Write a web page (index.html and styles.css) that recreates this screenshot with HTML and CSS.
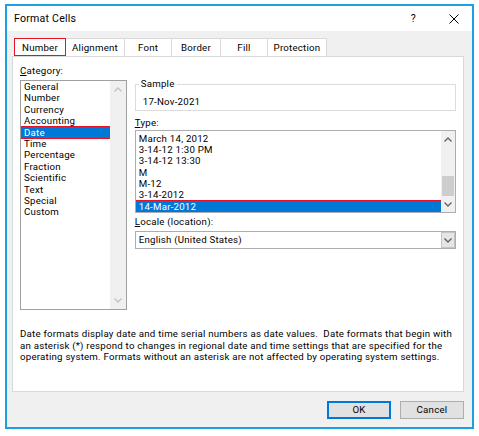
FILE: index.html
```html
<!DOCTYPE html>
<html>
<head>
<meta charset="utf-8">
<title>Format Cells</title>
<link rel="stylesheet" href="styles.css">
</head>
<body>
<div class="window">
  <div class="titlebar">
    <span class="title">Format Cells</span>
    <span class="help">?</span>
    <svg class="close" width="10" height="10" viewBox="0 0 10 10"><path d="M0.5 0.5 L9.5 9.5 M9.5 0.5 L0.5 9.5" stroke="#000" stroke-width="1" fill="none"/></svg>
  </div>
  <div class="body">
    <div class="tabs">
      <div class="tab selected w-number">Number</div>
      <div class="tab w-align">Alignment</div>
      <div class="tab w-font">Font</div>
      <div class="tab w-border">Border</div>
      <div class="tab w-fill">Fill</div>
      <div class="tab w-prot">Protection</div>
    </div>
    <div class="panel">
      <div class="columns">
        <div class="leftcol">
          <div class="label"><u>C</u>ategory:</div>
          <div class="listbox catlist">
            <div class="items">
              <div class="item">General</div>
              <div class="item">Number</div>
              <div class="item">Currency</div>
              <div class="item">Accounting</div>
              <div class="item sel">Date</div>
              <div class="item">Time</div>
              <div class="item">Percentage</div>
              <div class="item">Fraction</div>
              <div class="item">Scientific</div>
              <div class="item">Text</div>
              <div class="item">Special</div>
              <div class="item">Custom</div>
            </div>
            <div class="vscroll catscroll">
              <div class="arrow"><svg width="8" height="5" viewBox="0 0 8 5"><polyline points="0.5,4.5 4,1 7.5,4.5" fill="none" stroke="#c2c2c2" stroke-width="1.3"/></svg></div>
              <div class="track"></div>
              <div class="arrow"><svg width="8" height="5" viewBox="0 0 8 5"><polyline points="0.5,0.5 4,4 7.5,0.5" fill="none" stroke="#c2c2c2" stroke-width="1.3"/></svg></div>
            </div>
          </div>
        </div>
        <div class="rightcol">
          <fieldset class="sample">
            <legend>Sample</legend>
            <div class="sample-value">17-Nov-2021</div>
          </fieldset>
          <div class="label type-label"><u>T</u>ype:</div>
          <div class="listbox typelist">
            <div class="items typeitems">
              <div class="item">March 14, 2012</div>
              <div class="item">3-14-12 1:30 PM</div>
              <div class="item">3-14-12 13:30</div>
              <div class="item">M</div>
              <div class="item">M-12</div>
              <div class="item">3-14-2012</div>
              <div class="item sel">14-Mar-2012</div>
            </div>
            <div class="vscroll typescroll">
              <div class="arrow"><svg width="8" height="5" viewBox="0 0 8 5"><polyline points="0.5,4.5 4,1 7.5,4.5" fill="none" stroke="#606060" stroke-width="1.3"/></svg></div>
              <div class="track"><div class="thumb"></div></div>
              <div class="arrow"><svg width="8" height="5" viewBox="0 0 8 5"><polyline points="0.5,0.5 4,4 7.5,0.5" fill="none" stroke="#606060" stroke-width="1.3"/></svg></div>
            </div>
          </div>
          <div class="label locale-label"><u>L</u>ocale (location):</div>
          <div class="combo">
            <div class="combo-text">English (United States)</div>
            <div class="combo-btn"><svg width="8" height="5" viewBox="0 0 8 5"><polyline points="0.5,0.5 4,4 7.5,0.5" fill="none" stroke="#606060" stroke-width="1.3"/></svg></div>
          </div>
        </div>
      </div>
      <div class="desc">Date formats display date and time serial numbers as date values.&nbsp; Date formats that begin with<br>an asterisk (*) respond to changes in regional date and time settings that are specified for the<br>operating system. Formats without an asterisk are not affected by operating system settings.</div>
    </div>
    <div class="footer">
      <div class="btn default">OK</div>
      <div class="btn">Cancel</div>
    </div>
  </div>
</div>
</body>
</html>
```
FILE: styles.css
```css
html, body {
  margin: 0;
  padding: 0;
  background: #ffffff;
}
body {
  font-family: Roboto, "Noto Sans", sans-serif;
  font-size: 9.7px;
  letter-spacing: 0.22px;
  color: #000;
}
.window {
  box-sizing: border-box;
  margin: 4px 0 0 5px;
  width: 469px;
  height: 425px;
  border: 2px solid #1ba1e2;
  display: flex;
  flex-direction: column;
  background: #f0f0f0;
}
.titlebar {
  height: 25px;
  flex: none;
  background: #ffffff;
  display: flex;
  align-items: center;
  padding-left: 7px;
  padding-right: 13px;
}
.title {
  font-size: 10.6px;
  line-height: 14px;
}
.help {
  margin-left: auto;
  font-size: 10.5px;
  line-height: 14px;
  margin-right: 33px;
}
.close {
  display: block;
}
.body {
  flex: 1;
  display: flex;
  flex-direction: column;
  padding: 7px 8px 0 5px;
}
.tabs {
  display: flex;
  height: 18px;
  padding-left: 2px;
}
.tab {
  box-sizing: border-box;
  height: 18px;
  background: #ffffff;
  border-top: 1px solid #d9d9d9;
  border-right: 1px solid #d9d9d9;
  text-align: center;
  line-height: 17px;
}
.tab.selected {
  border: 1px solid #e81123;
}
.w-number { width: 52px; }
.w-align { width: 59px; }
.w-font { width: 47px; }
.w-border { width: 49px; }
.w-fill { width: 47px; }
.w-prot { width: 59px; }
.panel {
  box-sizing: border-box;
  height: 336px;
  background: #ffffff;
  border: 1px solid #d9d9d9;
  padding: 8px 7px 0 7px;
}
.columns {
  display: flex;
  gap: 8px;
}
.leftcol {
  width: 107px;
  display: flex;
  flex-direction: column;
}
.rightcol {
  width: 322px;
  display: flex;
  flex-direction: column;
}
.label {
  line-height: 12px;
  height: 12px;
}
.label u {
  text-decoration-thickness: 1px;
  text-underline-offset: 1px;
}
.listbox {
  box-sizing: border-box;
  border: 1px solid #a0a0a0;
  display: flex;
  background: #ffffff;
}
.catlist {
  margin-top: 3px;
  height: 230px;
}
.items {
  flex: 1;
  overflow: hidden;
}
.item {
  line-height: 11.4px;
  height: 11.4px;
  padding-left: 3px;
  white-space: nowrap;
}
.item.sel {
  background: #0078d7;
  color: #ffffff;
  outline: 1px solid #e81123;
}
.vscroll {
  background: #f0f0f0;
  display: flex;
  flex-direction: column;
}
.catscroll {
  width: 16px;
}
.catscroll .arrow {
  height: 17px;
}
.arrow {
  display: flex;
  align-items: center;
  justify-content: center;
}
.arrow svg, .combo-btn svg {
  display: block;
}
.track {
  flex: 1;
  display: flex;
  flex-direction: column;
  justify-content: flex-end;
}
.sample {
  margin: 13px 0 0 0;
  padding: 6px 7px 2px 7px;
  border: 1px solid #dcdcdc;
  min-width: 0;
}
.sample legend {
  padding: 0 2px;
  margin-left: -4px;
  line-height: 12px;
}
.sample-value {
  line-height: 12px;
}
.type-label {
  margin-top: 6px;
}
.typelist {
  margin-top: 1px;
  height: 83px;
  border-color: #abadb3;
}
.typeitems {
  padding-top: 1.5px;
}
.typescroll {
  width: 14px;
}
.typescroll .arrow {
  height: 16px;
}
.thumb {
  height: 20px;
  margin: 0 1px;
  background: #cdcdcd;
}
.locale-label {
  margin-top: 3px;
}
.combo {
  box-sizing: border-box;
  margin-top: 3px;
  height: 18px;
  border: 1px solid #abadb3;
  display: flex;
  background: #ffffff;
}
.combo-text {
  flex: 1;
  padding-left: 3px;
  line-height: 16px;
}
.combo-btn {
  box-sizing: border-box;
  width: 14px;
  height: 16px;
  background: #e5e5e5;
  border: 1px solid #c4c4c4;
  display: flex;
  align-items: center;
  justify-content: center;
}
.desc {
  margin-top: 18px;
  line-height: 11.7px;
  white-space: nowrap;
}
.footer {
  display: flex;
  justify-content: flex-end;
  gap: 9px;
  margin-top: 9px;
}
.btn {
  box-sizing: border-box;
  width: 64px;
  height: 18px;
  background: #e1e1e1;
  border: 1px solid #adadad;
  text-align: center;
  line-height: 16px;
}
.btn.default {
  border: 2px solid #0078d7;
  line-height: 14px;
}
```
